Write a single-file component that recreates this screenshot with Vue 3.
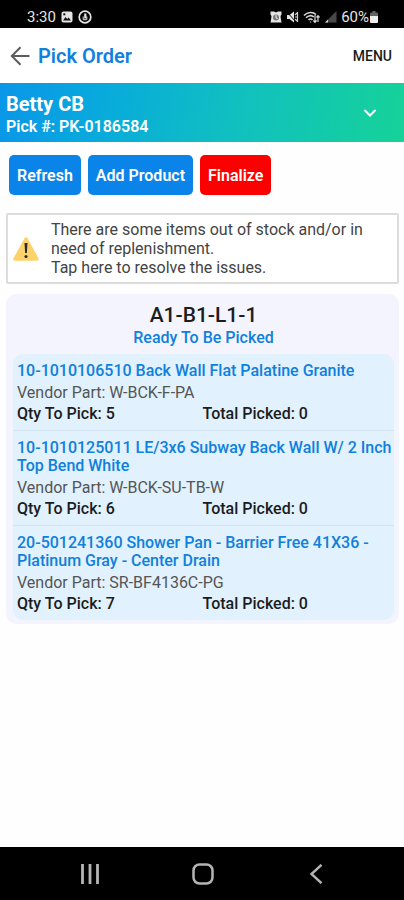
<script setup>
const items = [
  { name: '10-1010106510 Back Wall Flat Palatine Granite', part: 'W-BCK-F-PA', qty: 5, picked: 0 },
  { name: '10-1010125011 LE/3x6 Subway Back Wall W/ 2 Inch Top Bend White', part: 'W-BCK-SU-TB-W', qty: 6, picked: 0 },
  { name: '20-501241360 Shower Pan - Barrier Free 41X36 - Platinum Gray - Center Drain', part: 'SR-BF4136C-PG', qty: 7, picked: 0 },
]
</script>

<template>
  <div class="screen">
    <div class="status">
      <span class="status-side">
        <span class="clock">3:30</span>
        <svg width="12" height="12" viewBox="0 0 12 12">
          <rect x="0.5" y="0.5" width="11" height="11" rx="2" fill="#e4e4e4" />
          <path d="M2 9.5 4.5 6l1.7 2 1.4-1.6L10 9.5z" fill="#111" />
          <rect x="2.3" y="2.3" width="2" height="2" fill="#111" />
        </svg>
        <svg width="14" height="14" viewBox="0 0 14 14" fill="none" stroke="#e4e4e4">
          <circle cx="7" cy="7" r="5.8" stroke-width="1.7" />
          <path d="M7.300 3.500v5" stroke-width="2.200" />
          <path d="M5.200 6.500v3.200h3.600V6.500" stroke-width="1" />
        </svg>
      </span>
      <span class="status-side status-right">
        <svg width="12" height="12" viewBox="0 0 12 12">
          <path d="M.5.500h3.500L6 1.500 8 .5h3.500v3l-1 1.500L11 9l.5 2.500H.5L1 9l.5-4-1-1.500z" fill="#e4e4e4" />
          <circle cx="6" cy="6.500" r="3" fill="#777" />
          <path d="M6 4.200v2.500l1.600 1" fill="none" stroke="#fff" />
        </svg>
        <svg width="13" height="12" viewBox="0 0 13 12">
          <path d="M1 4h2.500L8 .5v11L3.500 8H1z" fill="#e4e4e4" />
          <path d="M1 1l9 10" fill="none" stroke="#000" />
          <path d="M9 4l2-2M9 6h3M9 8l2 2M11.500 1v10" fill="none" stroke="#d0d0d0" stroke-width="1.200" />
        </svg>
        <svg width="17" height="13" viewBox="0 0 17 13" fill="none" stroke="#d8d8d8" stroke-width="1.600">
          <path d="M1 4.500C4.500.7 10 .7 13 3.500M3 6.800c2.300-2.600 5.600-2.800 7.800-.8M5.500 9c1.200-1.300 2.800-1.300 4 0" />
          <path d="M7.500 11.500v-1M12 4v7M10.300 9.500 12 11.300l1.600-1.800M15 11V5M13.500 6.500 15 4.700l1.500 1.800" stroke-width="1.200" />
        </svg>
        <svg width="13" height="12" viewBox="0 0 13 12">
          <path d="M12.500 0v11.500H1z" fill="#484848" />
          <path d="M4 8.500v3H1z" fill="#d8d8d8" />
        </svg>
        <span class="battery">
          <span>60%</span>
          <svg width="8" height="12" viewBox="0 0 8 12">
            <path d="M2.500 0h3v1.500H7q1 0 1 1V5H0V2.500q0-1 1-1h1.500z" fill="#626262" />
            <path d="M0 5h8v6q0 1-1 1H1q-1 0-1-1z" fill="#eee" />
          </svg>
        </span>
      </span>
    </div>

    <header class="topbar">
      <button class="back" type="button" aria-label="Back">
        <svg width="20" height="20" viewBox="0 0 20 20" fill="none" stroke="#5c5c5c" stroke-width="2">
          <path d="M19.500 10H2M10.500 1.200 1.800 10l8.700 8.800" />
        </svg>
      </button>
      <h1 class="title">Pick Order</h1>
      <button class="menu" type="button">MENU</button>
    </header>

    <section class="band">
      <div>
        <h2 class="customer">Betty CB</h2>
        <p class="pick-no">Pick #: PK-0186584</p>
      </div>
      <button class="expand" type="button" aria-label="Show details">
        <svg width="14" height="10" viewBox="0 0 14 10" fill="none" stroke="#fff" stroke-width="2">
          <path d="M1.500 1 7 6.500 12.500 1" />
        </svg>
      </button>
    </section>

    <main class="content">
      <div class="actions">
        <button class="btn" type="button">Refresh</button>
        <button class="btn" type="button">Add Product</button>
        <button class="btn danger" type="button">Finalize</button>
      </div>

      <button class="alert" type="button">
        <svg class="warn" width="26" height="24" viewBox="0 0 26 24">
          <path d="M11.500 1.300q1.500-2 3 0L25.400 21q1 2.600-1.500 2.800H2.100Q-.4 23.600.6 21z" fill="#fdd26b" />
          <path d="M11.500 6h3l-.6 10h-1.800z" fill="#2b2b2b" />
          <circle cx="13" cy="19.500" r="1.600" fill="#2b2b2b" />
        </svg>
        <span>There are some items out of stock and/or in need of replenishment.<br />Tap here to resolve the issues.</span>
      </button>

      <section class="card">
        <h2 class="bin">A1-B1-L1-1</h2>
        <p class="state">Ready To Be Picked</p>
        <ul class="items">
          <li v-for="item in items" :key="item.name" class="item">
            <h3 class="name">{{ item.name }}</h3>
            <p class="part">Vendor Part: {{ item.part }}</p>
            <div class="counts">
              <span>Qty To Pick: {{ item.qty }}</span>
              <span>Total Picked: {{ item.picked }}</span>
            </div>
          </li>
        </ul>
      </section>
    </main>

    <nav class="navbar">
      <button type="button" aria-label="Recent apps">
        <svg width="20" height="20" viewBox="0 0 20 20" stroke="#b4b4b4" stroke-width="2.800">
          <path d="M2.500 0v20M10 0v20M17.500 0v20" />
        </svg>
      </button>
      <button type="button" aria-label="Home">
        <svg width="22" height="22" viewBox="0 0 22 22" fill="none" stroke="#b4b4b4" stroke-width="2.500">
          <rect x="1.500" y="1.500" width="19" height="19" rx="6" />
        </svg>
      </button>
      <button type="button" aria-label="Back">
        <svg width="20" height="20" viewBox="0 0 20 20" fill="none" stroke="#b4b4b4" stroke-width="2.400">
          <path d="M15.500 .8 5.500 10l10 9.200" />
        </svg>
      </button>
    </nav>
  </div>
</template>

<style>
body {
  margin: 0;
  background: #fefefe;
}
</style>

<style scoped>
.screen {
  min-height: 100vh;
  display: flex;
  flex-direction: column;
  font-family: Roboto, "Liberation Sans", sans-serif;
  color: #1c1c1c;
}
h1, h2, h3, p, ul {
  margin: 0;
  padding: 0;
}
button {
  font: inherit;
  color: inherit;
  border: 0;
  padding: 0;
  background: none;
  cursor: pointer;
}
svg {
  display: block;
  flex: none;
}
.status {
  display: flex;
  justify-content: space-between;
  align-items: center;
  height: 28px;
  padding: 6px 26px 0 27px;
  box-sizing: border-box;
  background: #000;
  color: #e4e4e4;
  font-size: 15px;
}
.status-side {
  display: flex;
  align-items: center;
  gap: 5px;
}
.status-right {
  gap: 4px;
}
.battery {
  display: flex;
  align-items: center;
  gap: 1px;
}
.topbar {
  display: flex;
  align-items: center;
  gap: 8px;
  height: 55px;
  padding: 0 12px 0 10px;
  background: #fff;
}
.title {
  flex: 1;
  font-size: 20px;
  font-weight: 600;
  color: #1280e0;
}
.menu {
  font-size: 14px;
  font-weight: 500;
}
.band {
  display: flex;
  justify-content: space-between;
  align-items: center;
  padding: 8px 27px 5px 6px;
  background: linear-gradient(100deg, #0a96e8 0%, #08aadc 25%, #10c0c0 58%, #16d298 100%);
  color: #fff;
}
.customer {
  font-size: 20px;
  line-height: 26px;
  font-weight: 700;
}
.pick-no {
  font-size: 16px;
  line-height: 20px;
  font-weight: 600;
}
.content {
  flex: 1;
  padding: 13px 5px 0 6px;
}
.actions {
  display: flex;
  gap: 7px;
  padding-left: 3px;
}
.btn {
  height: 40px;
  padding: 0 8px;
  border-radius: 5px;
  background: #0a84e8;
  color: #fff;
  font-size: 16px;
  font-weight: 600;
}
.danger {
  background: #fc0000;
}
.alert {
  display: flex;
  align-items: center;
  gap: 12px;
  width: 100%;
  margin-top: 18px;
  padding: 5px;
  border: 2px solid #dcdcdc;
  border-radius: 2px;
  background: #fff;
  color: #444;
  font-size: 16px;
  line-height: 19px;
  text-align: left;
}
.card {
  margin-top: 10px;
  padding: 8px 5px 4px 7px;
  border-radius: 10px;
  background: #f4f4fe;
}
.bin {
  font-size: 21px;
  line-height: 26px;
  font-weight: 500;
  text-align: center;
}
.state {
  font-size: 16px;
  line-height: 20px;
  font-weight: 500;
  text-align: center;
  color: #0f80dc;
}
.items {
  margin-top: 6px;
  list-style: none;
  border-radius: 10px;
  background: #e1f1fe;
}
.item {
  padding: 8px 0 6px 4px;
}
.item + .item {
  border-top: 1px solid #d3e5f1;
}
.name {
  font-size: 16px;
  line-height: 18px;
  font-weight: 500;
  color: #0f80dc;
}
.part {
  margin-top: 2px;
  font-size: 16px;
  line-height: 21px;
  color: #555;
}
.counts {
  display: grid;
  grid-template-columns: 1fr 1fr;
  padding-right: 6px;
  font-size: 16px;
  line-height: 21px;
  font-weight: 500;
}
.navbar {
  display: flex;
  justify-content: space-around;
  align-items: center;
  height: 53px;
  padding: 0 32px 0 34px;
  background: #000;
}
</style>
